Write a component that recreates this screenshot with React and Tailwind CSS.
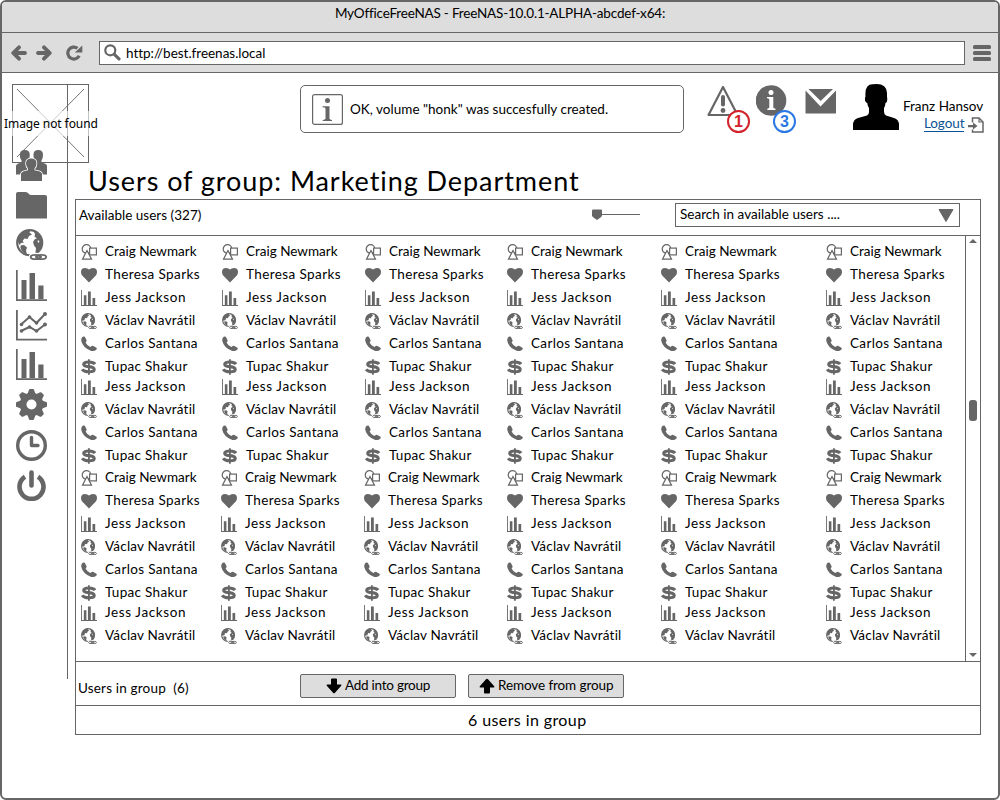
import React from "react";

const G = "#666666";

function Svg({ size = 31, box = 31, className = "", children }) {
  return (
    <svg width={size} height={size} viewBox={`0 0 ${box} ${box}`} className={`block shrink-0 ${className}`} fill="none">
      {children}
    </svg>
  );
}

const People = () => (
  <Svg>
    <g fill={G}>
      <path d="M0 24.500V16.500Q0 14 3 13.300L5.500 12.500V10.500Q3.800 8.500 3.800 5Q3.800 0 8.800 0Q13.800 0 13.800 5Q13.800 8.500 12 10.500V12.500L15 14V24.500Z" />
      <path d="M31 24.500V16.500Q31 14 28 13.300L25.500 12.500V10.500Q27 8.500 27 5Q27 0 22.300 0Q17.400 0 17.400 5Q17.400 8.500 19 10.500V12.500L16 14V24.500Z" />
    </g>
    <path d="M5 31V24.500Q5 22 8 21.300L12 20.300V18.500Q10 16.500 10 13.500Q10 8.500 15.200 8.500Q20.500 8.500 20.500 13.500Q20.500 16.500 18.500 18.500V20.300L23 21.300Q26 22 26 24.500V31Z" fill={G} stroke="#fff" strokeWidth="1.600" paintOrder="stroke" />
  </Svg>
);

const Folder = () => (
  <Svg>
    <path d="M0 27.500V3Q0 1 2 1H9.500Q11.500 1 12.500 2.500Q13.500 4 15.500 4H29Q31 4 31 6V27.500Z" fill={G} />
  </Svg>
);

const Globe = ({ size }) => (
  <Svg size={size}>
    <circle cx="13.700" cy="13.700" r="12.500" stroke={G} strokeWidth="2.200" />
    <path d="M3 7Q6 3 11 1L14.500 1L13.500 3.500L16 5.500L13 7L11.500 10L8.500 9.500L6.500 12L8 13.500L5 14L3.500 16L1.500 12Q1.500 9 3 7Z" fill={G} />
    <path d="M4.500 16.500L8 16L11 18.500L10 21.500L11 25.500Q6 23.500 4.500 19Z" fill={G} />
    <path d="M17.500 2L20 2.500Q25.500 6 26.500 11L26.500 16Q25 21 22 23.500L19.500 23L20 19L18 16.500L17 13L19 10L21 9.500L18.500 7.500L19 5Z" fill={G} />
    <path d="M22 11L23.500 12.500L22.500 14L21.500 12.500Z" fill="#fff" />
    <g stroke="#fff" strokeWidth="4.600"><ellipse cx="19.500" cy="28" rx="4.500" ry="2" /><ellipse cx="25.500" cy="28" rx="4.500" ry="2" /></g>
    <g stroke={G} strokeWidth="1.800"><ellipse cx="19.500" cy="28" rx="4.800" ry="2.200" /><ellipse cx="25.400" cy="28" rx="4.800" ry="2.200" /></g>
    <path d="M19 28H26" stroke={G} strokeWidth="1.500" />
  </Svg>
);

const Bars = ({ size }) => (
  <Svg size={size}>
    <path d="M0 0H1.700V29.300H31V31H0Z M5.500 10H10.500V29H5.500Z M13.500 3H19V29H13.500Z M22.300 15.500H27.500V29H22.300Z" fill={G} />
  </Svg>
);

const Lines = () => (
  <Svg>
    <path d="M0.900 0V29.600H31" stroke={G} strokeWidth="1.800" />
    <path d="M5 14.500L13.500 7L20.500 13L29 4" stroke={G} strokeWidth="2" />
    <path d="M5 21L13.500 17L20.500 21L29 14.500" stroke={G} strokeWidth="2" />
    <g fill={G}>
      <circle cx="5.500" cy="14.500" r="1.800" /><circle cx="13.500" cy="7" r="1.800" /><circle cx="20.500" cy="13" r="1.800" /><circle cx="29" cy="4" r="2" />
      <circle cx="5.500" cy="21" r="1.800" /><circle cx="13.500" cy="17" r="1.800" /><circle cx="20.500" cy="21" r="1.800" /><circle cx="29" cy="14.500" r="2" />
    </g>
  </Svg>
);

const Gear = () => (
  <Svg>
    <g fill={G}>
      {[0, 45, 90, 135].map((a) => (
        <path key={a} transform={`rotate(${a} 15.500 15.500)`} d="M11.500 5L13 0.800Q13.200 0 14 0H17Q17.800 0 18 0.800L19.500 5V26L18 30.200Q17.800 31 17 31H14Q13.200 31 13 30.200L11.500 26Z" />
      ))}
      <circle cx="15.500" cy="15.500" r="11.800" />
    </g>
    <circle cx="15.500" cy="15.500" r="5" fill="#fff" />
  </Svg>
);

const Clock = () => (
  <Svg>
    <circle cx="15.500" cy="15.500" r="13.800" stroke={G} strokeWidth="3.400" />
    <path d="M15.500 7.500V15.500H22" stroke={G} strokeWidth="3.400" strokeLinecap="round" strokeLinejoin="round" />
  </Svg>
);

const Power = () => (
  <Svg>
    <path d="M9 6.800A12 12 0 1 0 22 6.800" stroke={G} strokeWidth="4.600" />
    <path d="M15.500 2.500V15.500" stroke={G} strokeWidth="4.600" strokeLinecap="round" />
  </Svg>
);

const Shapes = () => (
  <Svg size={16} box={16}>
    <circle cx="5.500" cy="5" r="4.300" stroke={G} strokeWidth="1.200" />
    <rect x="8.600" y="4.100" width="6.800" height="6.800" fill="#fff" stroke={G} strokeWidth="1.200" />
    <path d="M6 6.500L10.500 15.200H1.500Z" fill="#fff" stroke={G} strokeWidth="1.200" />
  </Svg>
);

const Heart = () => (
  <Svg size={16} box={16}>
    <path d="M8 15.500L1.200 8.500Q0 7 0 5Q0 1 4 1Q6.500 1 8 2.600Q9.500 1 12 1Q16 1 16 5Q16 7 14.800 8.500Z" fill={G} />
  </Svg>
);

const Phone = () => (
  <Svg size={16} box={16}>
    <path d="M1 1.500Q2.200 0 3.800 0.800L5.600 4.200Q5.800 5.200 4.600 6.400Q5.900 9.300 9.300 11L10.800 10Q11.600 9.500 12.400 10L15.400 11.800Q16.200 12.600 15.400 13.500Q13.500 15.600 10.300 14.900Q1.900 12 0.300 5Q0 2.800 1 1.500Z" fill={G} />
  </Svg>
);

const Dollar = () => (
  <Svg size={16} box={16}>
    <path d="M14 5.200Q12.500 3 7.800 3Q2.700 3 2.700 5.200Q2.700 7.100 7.800 7.600Q13.200 8.200 13.200 10.400Q13.200 12.700 8 12.700Q2.800 12.700 1.300 10.300" stroke={G} strokeWidth="3.100" />
    <path d="M7.900 0.300V15.700" stroke={G} strokeWidth="1.800" />
  </Svg>
);

const USERS = {
  craig: ["Craig Newmark", <Shapes />, "tracking-[0px]"],
  theresa: ["Theresa Sparks", <Heart />, "tracking-[0.400px]"],
  jess: ["Jess Jackson", <Bars size={16} />, "tracking-[0.600px]"],
  vaclav: ["Václav Navrátil", <Globe size={16} />, "tracking-[0.200px]"],
  carlos: ["Carlos Santana", <Phone />, "tracking-[0.350px]"],
  tupac: ["Tupac Shakur", <Dollar />, "tracking-[0.300px]"],
};

const BLOCKS = [
  { keys: ["craig", "theresa", "jess", "vaclav", "carlos", "tupac"], gap: "" },
  { keys: ["jess", "vaclav", "carlos", "tupac"], gap: "-mt-[3px]" },
  { keys: ["craig", "theresa", "jess", "vaclav", "carlos", "tupac"], gap: "-mt-px" },
  { keys: ["jess", "vaclav"], gap: "-mt-[3px]" },
];

const COLUMNS = [
  { w: "w-[141px]", shift: false },
  { w: "w-[143px]", shift: true },
  { w: "w-[142px]", shift: true },
  { w: "w-[154px]", shift: false },
  { w: "w-[165px]", shift: false },
  { w: "w-[139px]", shift: false },
];

function UserColumn({ w, shift }) {
  return (
    <div className={`${w} shrink-0`}>
      {BLOCKS.map((b, i) => (
        <div key={i} className={`${b.gap} ${shift && i > 1 ? "-ml-px" : ""}`}>
          {b.keys.map((k) => (
            <div key={k} className="flex h-[23px] items-center gap-2">
              {USERS[k][1]}
              <span className={`whitespace-nowrap ${USERS[k][2]}`}>{USERS[k][0]}</span>
            </div>
          ))}
        </div>
      ))}
    </div>
  );
}

function BrowserBar() {
  return (
    <div className="bg-[#dddddd]">
      <div className="flex h-[31px] justify-center border-b border-[#666666] pt-px leading-[20px]">
        <span className="tracking-[-0.190px]">MyOfficeFreeNAS - FreeNAS-10.0.1-ALPHA-abcdef-x64:</span>
      </div>
      <div className="flex h-10 items-center border-b border-[#666666] pl-[9px]">
        <svg width="16" height="16" viewBox="0 0 16 16" fill="none" stroke={G} strokeWidth="3.800" strokeLinecap="round" strokeLinejoin="round">
          <path d="M8 2.300L2.200 8L8 13.700M3 8H14" />
        </svg>
        <svg className="ml-[9px]" width="16" height="16" viewBox="0 0 16 16" fill="none" stroke={G} strokeWidth="3.800" strokeLinecap="round" strokeLinejoin="round">
          <path d="M8 2.300L13.800 8L8 13.700M13 8H2" />
        </svg>
        <svg className="ml-[14px]" width="17" height="16" viewBox="0 0 17 16" fill="none">
          <path d="M13.200 10.800A6 6 0 1 1 11.500 3.300" stroke={G} strokeWidth="3.200" />
          <path d="M16.300 0.500V7.500H8.800Z" fill={G} />
        </svg>
        <div className="ml-4 flex h-6 w-[866px] items-center border border-[#666666] bg-white pl-1">
          <svg width="17" height="17" viewBox="0 0 17 17" fill="none" stroke={G}>
            <circle cx="6.300" cy="6.300" r="5" strokeWidth="2.200" />
            <path d="M10.300 10.300L15 14.800" strokeWidth="3.200" strokeLinecap="round" />
          </svg>
          <span className="ml-[5px] pt-[2px] tracking-[-0.020px]">http://best.freenas.local</span>
        </div>
        <svg className="ml-2" width="18" height="16" viewBox="0 0 18 16" fill={G}>
          <rect width="18" height="4" rx="1.500" /><rect y="6" width="18" height="4" rx="1.500" /><rect y="12" width="18" height="4" rx="1.500" />
        </svg>
      </div>
    </div>
  );
}

function Sidebar() {
  return (
    <aside className="mt-[11px] h-[595px] w-[66px] shrink-0 border-r border-[#666666]">
      <div className="relative z-10 ml-[10px] h-[79px] w-[77px]">
        <svg className="block" width="77" height="79" viewBox="0 0 77 79" fill="none" stroke={G}>
          <rect x="0.500" y="0.500" width="76" height="78" />
          <path d="M5 5L72 73M72 5L5 73" strokeWidth="0.900" />
        </svg>
        <div className="absolute top-[27px] -left-3 flex h-[25px] w-[98px] items-center bg-white/60 pt-px pl-1 font-['Noto_Sans',sans-serif] text-[12px] leading-none tracking-[-0.080px] whitespace-nowrap text-black">
          Image not found
        </div>
      </div>
      <nav className="relative z-10 -mt-[13px] ml-[13.5px] flex flex-col">
        <People />
        <div className="mt-[10px]"><Folder /></div>
        <div className="mt-[7px]"><Globe size={31} /></div>
        <div className="mt-[10px]"><Bars size={31} /></div>
        <div className="mt-[9px]"><Lines /></div>
        <div className="mt-[8px]"><Bars size={31} /></div>
        <div className="mt-[9px]"><Gear /></div>
        <div className="mt-[10px]"><Clock /></div>
        <div className="mt-[9px]"><Power /></div>
      </nav>
    </aside>
  );
}

function Badge({ n, className }) {
  return (
    <div className={`absolute flex size-[23px] items-center justify-center rounded-full border-2 bg-white font-['Liberation_Sans',sans-serif] text-[16px] leading-none font-bold ${className}`}>{n}</div>
  );
}

function TopRow() {
  return (
    <header className="flex h-[84px] pt-3 pl-[232px]">
      <div className="flex h-12 w-[384px] items-center rounded-[5px] border border-[#666666] pl-[11px]">
        <svg width="31" height="31" viewBox="0 0 31 31" fill="none">
          <rect x="0.600" y="0.600" width="29.800" height="29.800" rx="2" stroke={G} strokeWidth="1.200" />
          <circle cx="15.500" cy="6.500" r="2.500" fill={G} />
          <path d="M10.500 12.200H17.500V24.800Q17.600 25.900 20 26V27H10.700V26Q13.400 25.900 13.500 24.800V14.500Q13.400 13.300 10.500 13.200Z" fill={G} />
        </svg>
        <span className="ml-[7px] pt-[2px] whitespace-nowrap tracking-[0.020px]">OK, volume "honk" was succesfully created.</span>
      </div>
      <div className="relative ml-[23px] h-12 w-8">
        <svg width="32" height="32" viewBox="0 0 32 32" fill="none">
          <path d="M16 2L30.500 30H1.500Z" stroke={G} strokeWidth="2.200" strokeLinejoin="round" />
          <path d="M16 12V19.500" stroke={G} strokeWidth="4" strokeLinecap="round" />
          <circle cx="16" cy="25.500" r="2.400" fill={G} />
        </svg>
        <Badge n="1" className="top-[25px] left-5 border-[#d2232a] text-[#d2232a]" />
      </div>
      <div className="relative ml-[17px] h-12 w-[31px]">
        <svg width="31" height="31" viewBox="0 0 31 31">
          <circle cx="15" cy="15.500" r="15.300" fill={G} />
          <circle cx="15" cy="7.500" r="2.500" fill="#fff" />
          <path d="M11 12H17.300V22.500Q17.500 23.600 19.500 23.700V25H11.300V23.700Q13.200 23.600 13.300 22.500V14.500Q13.100 13.400 11 13.300Z" fill="#fff" />
        </svg>
        <Badge n="3" className="top-[25px] left-[17px] border-[#2b78e4] text-[#2b78e4]" />
      </div>
      <svg className="mt-[3px] ml-[18px]" width="31" height="26" viewBox="0 0 31 26">
        <path d="M0.500 2.500L15.500 18.500L31 2.500V25.500H0.500Z" fill={G} />
        <path d="M3.500 1H28L15.700 13Z" fill={G} />
      </svg>
      <svg className="-mt-px ml-[17px]" width="46" height="46" viewBox="0 0 46 46">
        <path d="M0 46V41Q0 35.500 5 34L14 31.500Q16.200 30.500 16 27.500V24Q14.500 22 14.300 19Q11.600 18.500 12 14Q12.200 13 12.500 12.500Q11.500 0 20 0.300Q33.500 -1.500 34 9V12.500Q35 18.500 32.500 19Q32.300 22 31 24V27.500Q31 30.500 33 31.500L41 34Q46 35.500 46 41V46Z" fill="#000" />
      </svg>
      <div className="mt-[12px] ml-1 w-[82px] text-right leading-[18px] whitespace-nowrap">
        <div className="text-left tracking-[0px]">Franz Hansov</div>
        <div className="flex items-start pl-[21px]">
          <a className="h-[17px] border-b border-[#0b5394] leading-[16px] tracking-[-0.100px] text-[#0b5394]">Logout</a>
          <svg className="mt-[2px] ml-[4px]" width="16" height="16" viewBox="0 0 16 16" fill="none">
            <path d="M4.500 5.500V1H11L15 5V15H4.500V12.500" stroke="#666666" strokeWidth="1.500" />
            <path d="M11 1V5H15" stroke="#666666" strokeWidth="1.200" />
            <path d="M0 8H5V5.500L9.500 9L5 12.500V10.300H0Z" fill={G} />
          </svg>
        </div>
      </div>
    </header>
  );
}

function Panel() {
  return (
    <section className="ml-[7px] flex h-[536px] w-[906px] flex-col border border-[#666666]">
      <div className="flex h-9 shrink-0 border-b border-[#666666]">
        <span className="w-[516px] pt-[5px] pl-[3px] leading-[20px] tracking-[0.020px]">Available users (327)</span>
        <svg className="mt-[9px]" width="48" height="12" viewBox="0 0 48 12">
          <path d="M9 5H48V6H9Z" fill={G} />
          <path d="M0 1.500Q0 0.500 1 0.500H9Q10 0.500 10 1.500V7Q9 8.500 5 11Q1 8.500 0 7Z" fill={G} />
        </svg>
        <div className="mt-[3px] ml-[35px] flex h-6 w-[285px] items-center justify-between border border-[#666666] pr-[5px] pl-1">
          <span className="tracking-[0.020px]">Search in available users ....</span>
          <svg width="16" height="13" viewBox="0 0 16 13"><path d="M1 0.500H15L8 12.500Z" fill={G} stroke={G} strokeLinejoin="round" /></svg>
        </div>
      </div>
      <div className="flex h-[426px] shrink-0 border-b border-[#666666]">
        <div className="flex w-[889px] pt-[4px] pl-[5px]">
          {COLUMNS.map((c, i) => <UserColumn key={i} {...c} />)}
        </div>
        <div className="flex w-[15px] flex-col items-center border-l border-[#666666] pt-[3px] pb-[4px]">
          <svg width="8" height="4" viewBox="0 0 8 4"><path d="M0 4L4 0L8 4Z" fill={G} /></svg>
          <div className="mt-[157px] h-[21px] w-2 rounded-[3px] bg-[#666666]" />
          <svg className="mt-auto" width="8" height="4" viewBox="0 0 8 4"><path d="M0 0L4 4L8 0Z" fill={G} /></svg>
        </div>
      </div>
      <div className="flex h-11 shrink-0 border-b border-[#666666]">
        <span className="w-[224px] pt-[16px] pl-[2px] leading-[20px] tracking-[0.180px] whitespace-pre">Users in group  (6)</span>
        <button className="mt-3 flex h-6 w-[156px] items-center rounded-[2px] border border-[#666666] bg-[#dddddd] pl-[25px]">
          <svg width="16" height="16" viewBox="0 0 16 16"><path d="M5 1.500Q5 0.500 6 0.500H10Q11 0.500 11 1.500V6.500H14.500Q16 6.500 15.200 7.800L9 14.800Q8 15.800 7 14.800L0.800 7.800Q0 6.500 1.500 6.500H5Z" /></svg>
          <span className="ml-[3px] tracking-[-0.250px] whitespace-nowrap">Add into group</span>
        </button>
        <button className="mt-3 ml-3 flex h-6 w-[156px] items-center rounded-[2px] border border-[#666666] bg-[#dddddd] pl-[10px]">
          <svg width="16" height="16" viewBox="0 0 16 16"><path d="M5 14.500Q5 15.500 6 15.500H10Q11 15.500 11 14.500V9.500H14.500Q16 9.500 15.200 8.200L9 1.200Q8 0.200 7 1.200L0.800 8.200Q0 9.500 1.500 9.500H5Z" /></svg>
          <span className="ml-[3px] tracking-[-0.100px] whitespace-nowrap">Remove from group</span>
        </button>
      </div>
      <div className="flex flex-1 items-center pl-[392px] text-[16px] leading-none tracking-[0.400px]">6 users in group</div>
    </section>
  );
}

export default function App() {
  return (
    <div className="h-[800px] w-[1000px] overflow-hidden bg-white font-['Lato',sans-serif] text-[13.5px] leading-none text-black">
      <div className="h-[800px] overflow-hidden rounded-[6px] border-2 border-[#666666] bg-white">
        <BrowserBar />
        <div className="flex">
          <Sidebar />
          <main className="w-[930px]">
            <TopRow />
            <h1 className="h-[42px] pt-[6px] pl-[20px] text-[27px] leading-[36px] tracking-[0.940px] whitespace-nowrap">Users of group: Marketing Department</h1>
            <Panel />
          </main>
        </div>
      </div>
    </div>
  );
}
